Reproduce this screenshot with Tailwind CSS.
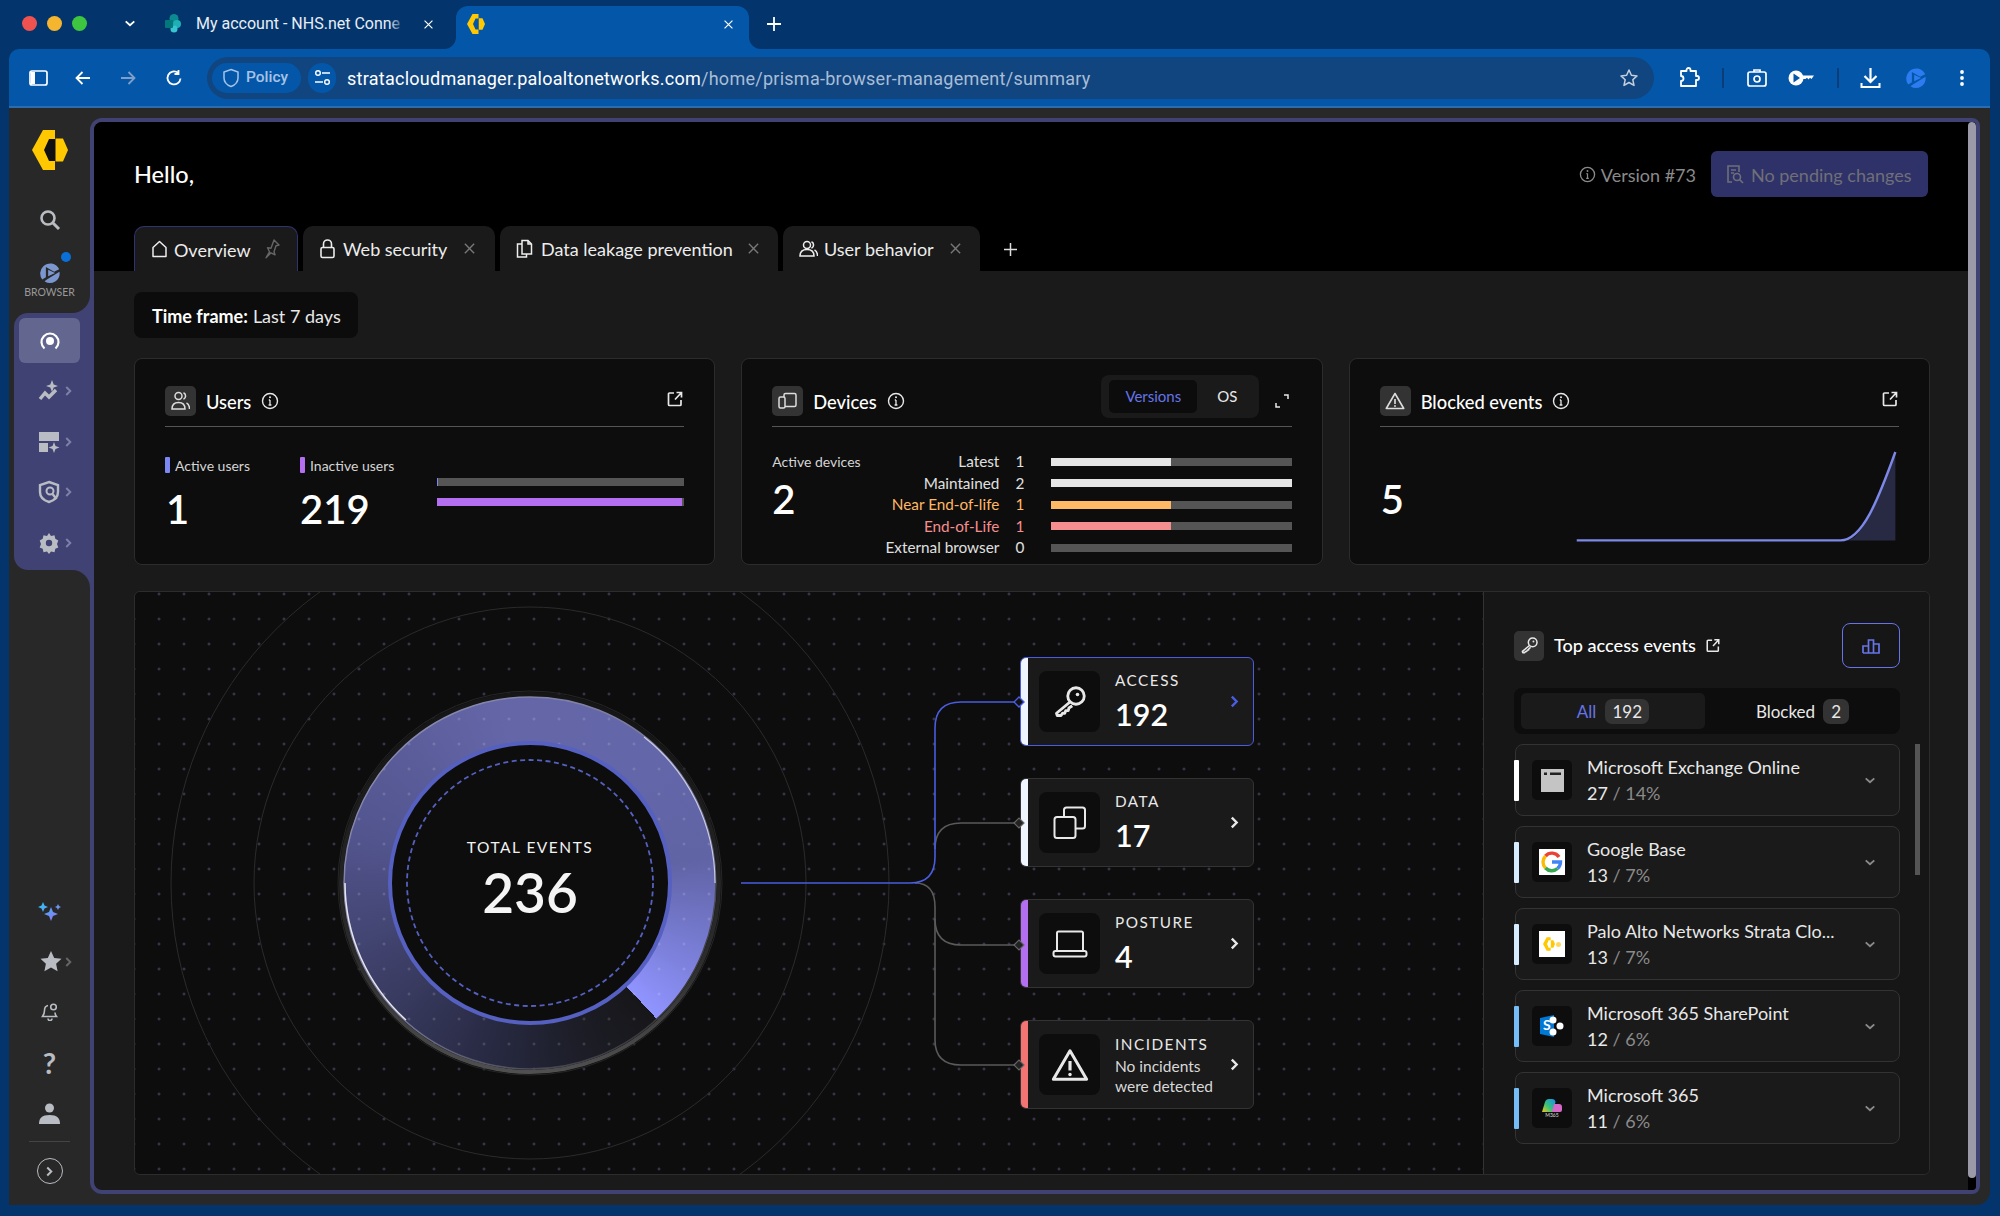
<!DOCTYPE html>
<html lang="en">
<head>
  <meta charset="UTF-8">
  <meta name="viewport" content="width=device-width, initial-scale=1.0">
  <title>Strata Cloud Manager</title>
  <script src="https://cdn.jsdelivr.net/npm/@tailwindcss/browser@4"></script>
</head>
<body class="bg-[#03356c] [font-family:Lato,sans-serif] w-[2000px] h-[1216px] overflow-hidden">
  <!-- shared icons -->
  <svg class="hidden">
    <symbol id="info" viewBox="0 0 18 18"><circle cx="9" cy="9" r="7.5" fill="none" stroke="currentColor" stroke-width="1.4"/><path d="M9 8v5M7.6 13h2.8M7.8 8H9" fill="none" stroke="currentColor" stroke-width="1.3"/><circle cx="9" cy="5.3" r="1" fill="currentColor"/></symbol>
    <symbol id="ext" viewBox="0 0 18 18"><path d="M8 3H3.5A1 1 0 0 0 2.500 4v10.500a1 1 0 0 0 1 1H14a1 1 0 0 0 1-1V10M9 9.500 15.500 2.500M10.500 2.500h5v5" fill="none" stroke="currentColor" stroke-width="1.700"/></symbol>
    <symbol id="close" viewBox="0 0 14 14"><path d="M2 2l10 10M12 2 2 12" fill="none" stroke="currentColor" stroke-width="1.500"/></symbol>
    <symbol id="chev" viewBox="0 0 10 14"><path d="M2.500 2.500 7 7l-4.500 4.500" fill="none" stroke="currentColor" stroke-width="2.200"/></symbol>
    <symbol id="down" viewBox="0 0 14 10"><path d="M2 2.500 7 7l5-4.500" fill="none" stroke="currentColor" stroke-width="2.200"/></symbol>
    <symbol id="key" viewBox="0 0 24 24"><circle cx="16" cy="8" r="5.500" fill="none" stroke="currentColor" stroke-width="1.900"/><circle cx="17" cy="7" r="1.200" fill="currentColor"/><path d="M12 12 3 19.500l.5 1.500h2.500l1-1.500h1.500l.7-1.800h1.600l.5-1.700 2.200-1.500" fill="none" stroke="currentColor" stroke-width="1.900" stroke-linejoin="round"/></symbol>
    <symbol id="warn" viewBox="0 0 24 24"><path d="M12 3 22.500 21h-21z" fill="none" stroke="currentColor" stroke-width="1.900" stroke-linejoin="round"/><path d="M12 9.500v6" stroke="currentColor" stroke-width="2"/><circle cx="12" cy="18" r="1.100" fill="currentColor"/></symbol>
    <symbol id="logo" viewBox="31 130 36 40"><path d="M42 130h12v9h-6l-5 11 5 11h6v9H42l-11-20z" fill="#ffc800"/><path d="M54.500 138.500H62l5 11.500-5 11.500h-7.500z" fill="#ffc800"/></symbol>
    <symbol id="play" viewBox="0 0 24 24"><path d="M4.500 5A10.500 10.500 0 0 1 22 8l-5.500 2.500L7.500 5.500v11L3.500 19A10.500 10.500 0 0 1 4.500 5z" fill="currentColor"/><path d="M10 8.500 17.500 12l-7.500 3.500zM22.300 10.500A10.500 10.500 0 0 1 6 21l3.500-2.500z" fill="currentColor"/></symbol>
  </svg>

  <!-- tab strip -->
  <div class="h-[49px] flex items-end relative text-white">
    <div class="absolute left-[22px] top-[16px] flex gap-[10px]">
      <span class="w-[15px] h-[15px] rounded-full bg-[#f0524f]"></span>
      <span class="w-[15px] h-[15px] rounded-full bg-[#f5b52e]"></span>
      <span class="w-[15px] h-[15px] rounded-full bg-[#3ec640]"></span>
    </div>
    <svg class="absolute left-[124px] top-[19px] w-[12px] h-[9px] text-white"><use href="#down"/></svg>
    <!-- inactive tab -->
    <div class="absolute left-[164px] top-[14px] flex items-center h-[20px]">
      <svg class="w-[18px] h-[20px]" viewBox="0 0 18 20"><circle cx="10" cy="4.500" r="4.500" fill="#0b8a8f"/><circle cx="13" cy="10" r="4" fill="#1fb0b6"/><circle cx="10" cy="15" r="3.500" fill="#37c6d0"/><rect x="1" y="6" width="8" height="8" rx="1" fill="#03787c"/></svg>
      <div class="ml-[14px] w-[209px] whitespace-nowrap text-[16px] text-[#e8eef5] [font-family:Roboto,sans-serif] relative">My account - NHS.net Conne
        <span class="absolute right-0 top-0 bottom-0 w-[16px] bg-gradient-to-r from-transparent to-[#03356c]"></span>
      </div>
    </div>
    <svg class="absolute left-[423px] top-[19px] w-[11px] h-[11px] text-white"><use href="#close"/></svg>
    <!-- active tab -->
    <div class="absolute left-[456px] top-[6px] w-[293px] h-[43px] bg-[#0457a8] rounded-t-[12px]">
      <svg class="absolute -left-[12px] bottom-0 w-[12px] h-[12px]" viewBox="0 0 12 12"><path d="M12 0v12H0A12 12 0 0 0 12 0z" fill="#0457a8"/></svg>
      <svg class="absolute -right-[12px] bottom-0 w-[12px] h-[12px]" viewBox="0 0 12 12"><path d="M0 0v12h12A12 12 0 0 1 0 0z" fill="#0457a8"/></svg>
      <svg class="absolute left-[11px] top-[8px] w-[18px] h-[20px]"><use href="#logo"/></svg>
      <svg class="absolute left-[267px] top-[13px] w-[11px] h-[11px] text-white"><use href="#close"/></svg>
    </div>
    <svg class="absolute left-[767px] top-[17px] w-[14px] h-[14px]" viewBox="0 0 14 14"><path d="M7 0v14M0 7h14" stroke="#fff" stroke-width="1.800"/></svg>
  </div>

  <!-- toolbar -->
  <div class="ml-[9px] mr-[10px] h-[59px] bg-[#0457a8] border-b-2 border-[#2a6cae] rounded-tl-[10px] rounded-tr-[10px] flex items-center text-white">
    <div class="w-[198px] flex items-center">
      <svg class="ml-[20px] w-[19px] h-[18px]" viewBox="0 0 19 18"><rect x="1" y="2" width="17" height="14" rx="2" fill="none" stroke="#fff" stroke-width="1.700"/><rect x="2" y="3" width="4" height="12" fill="#fff"/></svg>
      <svg class="ml-[26px] w-[18px] h-[18px]" viewBox="0 0 18 18"><path d="M16 9H3M8.500 3 2.500 9l6 6" fill="none" stroke="#fff" stroke-width="1.800"/></svg>
      <svg class="ml-[27px] w-[18px] h-[18px]" viewBox="0 0 18 18"><path d="M2 9h13M9.500 3l6 6-6 6" fill="none" stroke="#7f9fcb" stroke-width="1.800"/></svg>
      <svg class="ml-[28px] w-[18px] h-[18px]" viewBox="0 0 18 18"><path d="M15.500 9.500A6.500 6.500 0 1 1 13 3.800M13.500 1v4h-4" fill="none" stroke="#fff" stroke-width="1.800"/></svg>
    </div>
    <div class="w-[1447px] h-[42px] rounded-full bg-[#11457f] flex items-center pl-[5px]">
      <div class="w-[89px] h-[30px] rounded-full bg-[#0457a8] flex items-center pl-[10px]">
        <svg class="w-[18px] h-[20px]" viewBox="0 0 18 20"><path d="M9 1.500 16 4v6c0 4-3 7-7 8.500C5 17 2 14 2 10V4z" fill="none" stroke="#a6c3e6" stroke-width="1.500"/></svg>
        <span class="ml-[6px] text-[15.500px] font-medium text-[#a6c3e6] [font-family:Roboto,sans-serif]">Policy</span>
      </div>
      <div class="ml-[7px] w-[28px] h-[30px] rounded-full bg-[#0457a8] flex items-center justify-center">
        <svg class="w-[17px] h-[17px]" viewBox="0 0 17 17"><circle cx="4" cy="4" r="2.300" fill="none" stroke="#fff" stroke-width="1.400"/><path d="M8 4h8M1 13h8" stroke="#fff" stroke-width="1.400"/><circle cx="13" cy="13" r="2.300" fill="none" stroke="#fff" stroke-width="1.400"/></svg>
      </div>
      <div class="ml-[11px] mt-[1px] flex-1 text-[18px] tracking-[0.26px] whitespace-nowrap text-white [font-family:Roboto,sans-serif]">stratacloudmanager.paloaltonetworks.com<span class="text-[#a9bdd6]">/home/prisma-browser-management/summary</span></div>
      <svg class="mr-[15px] w-[20px] h-[20px]" viewBox="0 0 20 20"><path d="M10 2l2.400 5.300 5.600.6-4.200 3.800 1.200 5.700L10 14.500l-5 2.900 1.200-5.700L2 7.900l5.600-.6z" fill="none" stroke="#c5d0dc" stroke-width="1.500" stroke-linejoin="round"/></svg>
    </div>
    <div class="flex items-center">
      <svg class="ml-[25px] w-[21px] h-[21px]" viewBox="0 0 21 21"><path d="M2 4h5.500V3a2 2 0 0 1 4 0v1H17v5h1a2 2 0 0 1 0 4h-1v6H2v-5a2.500 2.500 0 0 0 0-5z" fill="none" stroke="#fff" stroke-width="1.800" stroke-linejoin="round"/></svg>
      <span class="ml-[22px] w-[2px] h-[20px] bg-[#0b3d79]"></span>
      <svg class="ml-[23px] w-[20px] h-[20px]" viewBox="0 0 20 20"><rect x="1" y="4" width="18" height="14" rx="2" fill="none" stroke="#fff" stroke-width="1.700"/><path d="M7 4V2h6v2" fill="none" stroke="#fff" stroke-width="1.700"/><circle cx="10" cy="11" r="3" fill="none" stroke="#fff" stroke-width="1.700"/></svg>
      <svg class="ml-[21px] w-[26px] h-[18px]" viewBox="0 0 26 18"><circle cx="8" cy="9" r="7.500" fill="#fff"/><path d="M5.500 4.500 12 9l-6.500 4.500z" fill="#0457a8"/><path d="M14 6.500h12l-2.500 3.500-1.500-1.200-1.500 1.700-1.500-1.700-1.500 1.200H14z" fill="#fff"/></svg>
      <span class="ml-[23px] w-[2px] h-[20px] bg-[#0b3d79]"></span>
      <svg class="ml-[21px] w-[21px] h-[22px]" viewBox="0 0 21 22"><path d="M10.500 1v13M4.500 9l6 6 6-6" fill="none" stroke="#fff" stroke-width="2.200"/><path d="M1.500 16v4h18v-4" fill="none" stroke="#fff" stroke-width="2"/></svg>
      <svg class="ml-[24px] w-[22px] h-[22px] text-[#2d7bf0]"><use href="#play"/></svg>
      <svg class="ml-[32px] w-[6px] h-[18px]" viewBox="0 0 6 18"><circle cx="3" cy="3" r="1.900" fill="#fff"/><circle cx="3" cy="9" r="1.900" fill="#fff"/><circle cx="3" cy="15" r="1.900" fill="#fff"/></svg>
    </div>
  </div>

  <!-- browser frame -->
  <div class="ml-[9px] mr-[10px] h-[1097px] bg-[#282828] rounded-b-[14px] flex">
    <!-- product sidebar -->
    <div class="w-[81px] shrink-0 flex flex-col relative text-[#b9bcc2]">
      <div class="absolute right-0 top-[170px] h-[310px] w-[24px] bg-[#3f4272]"></div>
      <div class="h-[205px] bg-[#282828] rounded-br-[18px] relative flex flex-col items-center">
        <svg class="mt-[22px] w-[36px] h-[40px]" viewBox="31 130 36 40"><path d="M48 139h7v22h-7l-5-11z" fill="#111"/><use href="#logo" x="31" y="130" width="36" height="40"/></svg>
        <svg class="mt-[39px] w-[22px] h-[22px]" viewBox="0 0 22 22"><circle cx="9" cy="9" r="6.500" fill="none" stroke="currentColor" stroke-width="2.600"/><path d="M14 14l6 6" stroke="currentColor" stroke-width="3"/></svg>
        <div class="relative mt-[31px] w-[22px] h-[22px] text-[#7c97cf]">
          <svg class="w-[22px] h-[22px]"><use href="#play"/></svg>
          <span class="absolute -right-[10px] -top-[10px] w-[10px] h-[10px] rounded-full bg-[#0a6fd8]"></span>
        </div>
        <div class="text-[10.500px] text-[#999] mt-[1px]">BROWSER</div>
      </div>
      <div class="h-[257px] ml-[5px] bg-[#3f4272] rounded-l-[14px] relative flex flex-col">
        <div class="ml-[5px] mt-[5px] w-[61px] h-[45px] rounded-[6px] bg-[#63668f] flex items-center justify-center">
          <svg class="w-[22px] h-[22px]" viewBox="0 0 22 22"><path d="M5.500 18.500A8.500 8.500 0 1 1 16.500 18.500" fill="none" stroke="#fff" stroke-width="2.200"/><circle cx="11" cy="11" r="4" fill="#fff"/></svg>
        </div>
        <div class="flex-1 flex flex-col justify-around pt-[1px] pb-[2px]">
          <div class="flex items-center pl-[24px]">
            <svg class="w-[22px] h-[26px]" viewBox="0 0 22 24"><path d="M14 1l1.700 4.500 4.300 1.500-4.300 1.500-1.700 4.500-1.700-4.500-4.300-1.500 4.300-1.500z" fill="currentColor"/><path d="M2 20l5-6 4 4 7-7" fill="none" stroke="currentColor" stroke-width="3.400"/></svg>
            <svg class="ml-[4px] w-[9px] h-[14px] text-[#7d81a6]"><use href="#chev"/></svg>
          </div>
          <div class="flex items-center pl-[24px]">
            <svg class="w-[22px] h-[22px]" viewBox="0 0 22 22"><rect x="1" y="1" width="20" height="9" fill="currentColor"/><rect x="1" y="12" width="9" height="9" fill="currentColor"/><path d="M16 11l1.500 4 4 1.500-4 1.500-1.500 4-1.500-4-4-1.500 4-1.500z" fill="currentColor"/></svg>
            <svg class="ml-[4px] w-[9px] h-[14px] text-[#7d81a6]"><use href="#chev"/></svg>
          </div>
          <div class="flex items-center pl-[24px]">
            <svg class="w-[22px] h-[24px]" viewBox="0 0 22 22"><path d="M11 1l9 3v7c0 5-4 8.500-9 10C6 19.500 2 16 2 11V4z" fill="none" stroke="currentColor" stroke-width="2.400"/><circle cx="12" cy="10" r="3.500" fill="#3f4272" stroke="currentColor" stroke-width="2"/><path d="M14.500 13l4 5" stroke="currentColor" stroke-width="2.400"/></svg>
            <svg class="ml-[4px] w-[9px] h-[14px] text-[#7d81a6]"><use href="#chev"/></svg>
          </div>
          <div class="flex items-center pl-[24px]">
            <svg class="w-[22px] h-[24px]" viewBox="0 0 22 22"><path d="M11 1l2 3 3.500-.8.800 3.500 3 1.800-1.300 3.500 1.300 3.500-3 1.300-.8 3.500-3.500-.8-2 2.500-2-2.500-3.500.8-.8-3.500-3-1.300L3 12 1.700 8.500l3-1.800.8-3.500L9 4z" fill="currentColor"/><circle cx="11" cy="11" r="3.200" fill="#3f4272"/></svg>
            <svg class="ml-[4px] w-[9px] h-[14px] text-[#7d81a6]"><use href="#chev"/></svg>
          </div>
        </div>
      </div>
      <div class="flex-1 bg-[#282828] rounded-tr-[18px] relative flex flex-col items-center justify-end pb-[21px]">
        <div class="h-[50px] flex items-center pt-[6px]">
          <svg class="w-[24px] h-[24px]" viewBox="0 0 24 24">
            <defs><linearGradient id="spark" x1="0" y1="0" x2="1" y2="1"><stop offset="0" stop-color="#2bc6f5"/><stop offset="1" stop-color="#9a6df5"/></linearGradient></defs>
            <path d="M5 0l1.500 3.500L10 5 6.500 6.500 5 10 3.500 6.500 0 5l3.500-1.500zM13 5l2 5 5 2-5 2-2 5-2-5-5-2 5-2zM20 2l1 2 2 1-2 1-1 2-1-2-2-1 2-1z" fill="url(#spark)"/>
          </svg>
        </div>
        <div class="h-[51px] flex items-center pl-[13px]">
          <svg class="w-[22px] h-[21px]" viewBox="0 0 22 21"><path d="M11 0l3.200 7 7.300.8-5.400 5 1.500 7.500L11 16.500l-6.600 3.800 1.500-7.500-5.400-5L7.800 7z" fill="currentColor"/></svg>
          <svg class="ml-[2px] w-[9px] h-[14px] text-[#666]"><use href="#chev"/></svg>
        </div>
        <div class="h-[50px] flex items-center">
          <svg class="w-[18px] h-[18px]" viewBox="0 0 18 18" fill="none" stroke="currentColor" stroke-width="1.600"><path d="M7 2.500C4.500 3 3.500 5 3.500 7.500 3.500 10 3 11.500 1.500 13.500h14c-1-1.300-1.500-2.500-1.500-4"/><path d="M7 15.500a2 2 0 0 0 4 0"/><circle cx="12.500" cy="4" r="2.800"/></svg>
        </div>
        <div class="h-[51px] flex items-center text-[29px] font-bold leading-none">?</div>
        <div class="h-[50px] flex items-center">
          <svg class="w-[21px] h-[21px]" viewBox="0 0 21 21"><circle cx="10.500" cy="5" r="4.500" fill="currentColor"/><path d="M0 21c0-6 3-9 10.500-9S21 15 21 21z" fill="currentColor"/></svg>
        </div>
        <div class="mt-[3px] w-[41px] h-px bg-[#444]"></div>
        <div class="mt-[16px] w-[26px] h-[26px] rounded-full border border-[#b9bcc2] flex items-center justify-center">
          <svg class="w-[9px] h-[13px]"><use href="#chev"/></svg>
        </div>
      </div>
    </div>

    <!-- main panel -->
    <div class="mt-[10px] mb-[11px] mr-[10px] flex-1 border-4 border-[#3f4272] rounded-tl-[12px] rounded-bl-[12px] rounded-r-[8px] overflow-hidden flex bg-[#1a1a1a]">
      <div class="flex-1 flex flex-col min-w-0">
        <div class="h-[149px] bg-black flex flex-col px-[40px] pt-[29px] text-white">
          <div class="h-[46px] flex items-center justify-between">
            <div class="text-[23.500px] font-medium pt-[2px]">Hello,</div>
            <div class="flex items-center">
              <svg class="w-[17px] h-[17px] text-[#8a8a8a]"><use href="#info"/></svg>
              <span class="ml-[5px] text-[18px] text-[#8a8a8a] pt-[2px]">Version #73</span>
              <div class="ml-[15px] w-[217px] h-[46px] rounded-[6px] bg-[#2f3268] flex items-center pl-[15px]">
                <svg class="w-[18px] h-[21px]" viewBox="0 0 18 21"><path d="M6 18H2V2h11v6" fill="none" stroke="#6f6f78" stroke-width="1.600"/><path d="M5 6h5M5 9h3" stroke="#6f6f78" stroke-width="1.500"/><circle cx="11" cy="13" r="3.500" fill="none" stroke="#6f6f78" stroke-width="1.600"/><path d="M13.500 15.500 17 19" stroke="#6f6f78" stroke-width="1.600"/></svg>
                <span class="ml-[7px] text-[18px] text-[#6f6f78] whitespace-nowrap pt-[2px]">No pending changes</span>
              </div>
            </div>
          </div>
          <div class="mt-auto flex items-end gap-[5px] text-[18px] text-[#ededed]">
            <div class="w-[164px] h-[45px] rounded-t-[10px] bg-[#1a1a1a] border-t border-l border-r border-[#2e3470] flex items-center pl-[16px]">
              <svg class="w-[17px] h-[18px]" viewBox="0 0 17 18"><path d="M2 7.500 8.500 1.500 15 7.500V16.500H2z" fill="none" stroke="currentColor" stroke-width="1.500" stroke-linejoin="round"/></svg>
              <span class="ml-[6px] pt-[2px]">Overview</span>
              <svg class="ml-[11px] w-[19px] h-[20px] text-[#666]" viewBox="0 0 19 20"><path d="M12 1l5 5-3 .8-2 6 1 3-4-2-5 5 3.500-6-2-4 3.500.500z" fill="none" stroke="currentColor" stroke-width="1.400" stroke-linejoin="round"/></svg>
            </div>
            <div class="w-[192px] h-[45px] rounded-t-[10px] bg-[#1a1a1a] flex items-center pl-[17px]">
              <svg class="w-[15px] h-[20px]" viewBox="0 0 15 20"><rect x="1" y="8.500" width="13" height="10" rx="1.500" fill="none" stroke="currentColor" stroke-width="1.600"/><path d="M3.500 8.500V5a4 4 0 0 1 8 0v3.500" fill="none" stroke="currentColor" stroke-width="1.600"/></svg>
              <span class="ml-[8px] pt-[2px]">Web security</span>
              <svg class="ml-[16px] w-[13px] h-[13px] text-[#777]"><use href="#close"/></svg>
            </div>
            <div class="w-[278px] h-[45px] rounded-t-[10px] bg-[#1a1a1a] flex items-center pl-[16px]">
              <svg class="w-[17px] h-[19px]" viewBox="0 0 17 19"><path d="M6 5H1.500v13h9v-3" fill="none" stroke="currentColor" stroke-width="1.500"/><path d="M6 1.500h6l3.500 3.500v10H6zM12 1.500V5h3.500" fill="none" stroke="currentColor" stroke-width="1.500"/></svg>
              <span class="ml-[8px] whitespace-nowrap pt-[2px]">Data leakage prevention</span>
              <svg class="ml-[14px] w-[13px] h-[13px] text-[#777]"><use href="#close"/></svg>
            </div>
            <div class="w-[197px] h-[45px] rounded-t-[10px] bg-[#1a1a1a] flex items-center pl-[16px]">
              <svg class="w-[19px] h-[18px]" viewBox="0 0 19 18"><circle cx="8" cy="5" r="3.500" fill="none" stroke="currentColor" stroke-width="1.500"/><path d="M1 16c0-5 3-6.500 7-6.500s7 1.500 7 6.500zM12.500 1.800a3.500 3.500 0 0 1 0 6.400M15.500 10c2 1 3 3 3 6" fill="none" stroke="currentColor" stroke-width="1.500"/></svg>
              <span class="ml-[6px] whitespace-nowrap pt-[2px]">User behavior</span>
              <svg class="ml-[15px] w-[13px] h-[13px] text-[#777]"><use href="#close"/></svg>
            </div>
            <svg class="ml-[19px] mb-[15px] w-[13px] h-[13px]" viewBox="0 0 13 13"><path d="M6.500 0v13M0 6.500h13" stroke="#ddd" stroke-width="1.500"/></svg>
          </div>
        </div>

        <div class="flex-1 pl-[40px] pr-[38px] pt-[21px]">
          <div class="w-[224px] h-[46px] rounded-[8px] bg-[#0c0c0c] flex items-center pl-[18px] pt-[2px] text-[18px] text-[#e8e8e8] whitespace-nowrap">
            <span class="font-bold text-white">Time frame:</span><span class="ml-[5px]">Last 7 days</span>
          </div>

          <div class="mt-[20px] grid grid-cols-3 gap-[26px] text-white">
            <!-- Users -->
            <div class="h-[207px] bg-[#0d0d0d] border border-[#2c2c2c] rounded-[8px] px-[30px] pt-[27px]">
              <div class="h-[41px] pb-[10px] border-b border-[#555] flex items-start">
                <div class="w-[31px] h-[30px] rounded-[5px] bg-[#333] flex items-center justify-center">
                  <svg class="w-[19px] h-[20px]" viewBox="0 0 19 20"><circle cx="7.500" cy="5" r="3.500" fill="none" stroke="#ddd" stroke-width="1.500"/><path d="M1 18c0-5 3-6.500 6.500-6.500S14 13 14 18zM12.500 1.800a3.500 3.500 0 0 1 0 6.400M15.500 12c2 1 3 3 3 6" fill="none" stroke="#ddd" stroke-width="1.500"/></svg>
                </div>
                <span class="ml-[10px] text-[18.300px] font-medium leading-[32px]">Users</span>
                <svg class="ml-[10px] mt-[6px] w-[18px] h-[18px] text-[#e8e8e8]"><use href="#info"/></svg>
                <svg class="ml-auto mt-[4px] w-[18px] h-[18px] text-[#e8e8e8]"><use href="#ext"/></svg>
              </div>
              <div class="flex mt-[30px]">
                <div class="w-[135px]">
                  <div class="flex items-center text-[14px] text-[#d5d5d5] h-[16px]"><span class="w-[5px] h-[16px] bg-[#7d86f5] rounded-[1px] mr-[5px]"></span>Active users</div>
                  <div class="text-[40px] font-semibold leading-[48px] mt-[12px] pl-[1px]">1</div>
                </div>
                <div class="w-[137px]">
                  <div class="flex items-center text-[14px] text-[#d5d5d5] h-[16px]"><span class="w-[5px] h-[16px] bg-[#b46ef0] rounded-[1px] mr-[5px]"></span>Inactive users</div>
                  <div class="text-[40px] font-semibold leading-[48px] mt-[12px]">219</div>
                </div>
                <div class="flex-1 mt-[21px] flex flex-col gap-[12px]">
                  <div class="h-[8px] bg-[#555]"><div class="w-[1px] h-full bg-[#7d86f5]"></div></div>
                  <div class="h-[8px] bg-[#555]"><div class="w-[99%] h-full bg-[#b46ef0]"></div></div>
                </div>
              </div>
            </div>

            <!-- Devices -->
            <div class="h-[207px] bg-[#0d0d0d] border border-[#2c2c2c] rounded-[8px] px-[30px] pt-[27px] relative">
              <div class="h-[41px] pb-[10px] border-b border-[#555] flex items-start">
                <div class="w-[31px] h-[30px] rounded-[5px] bg-[#333] flex items-center justify-center">
                  <svg class="w-[19px] h-[18px]" viewBox="0 0 19 18"><rect x="6" y="1.500" width="12" height="13" rx="1.500" fill="none" stroke="#ddd" stroke-width="1.500"/><rect x="1" y="5" width="6" height="11" rx="1.500" fill="#333" stroke="#ddd" stroke-width="1.500"/></svg>
                </div>
                <span class="ml-[10px] text-[18.300px] font-medium leading-[32px]">Devices</span>
                <svg class="ml-[10px] mt-[6px] w-[18px] h-[18px] text-[#e8e8e8]"><use href="#info"/></svg>
              </div>
              <div class="absolute left-[359px] top-[16px] w-[158px] h-[43px] rounded-[8px] bg-[#1a1a1a] flex items-center pl-[8px] text-[15px]">
                <div class="w-[88px] h-[33px] rounded-[5px] bg-[#0c0c0c] text-[#6674e8] flex items-center justify-center">Versions</div>
                <div class="w-[60px] text-center text-[#e8e8e8]">OS</div>
              </div>
              <svg class="absolute left-[533px] top-[35px] w-[14px] h-[14px]" viewBox="0 0 14 14"><path d="M9 1h4v4M1 9v4h4" fill="none" stroke="#e8e8e8" stroke-width="1.500"/></svg>
              <div class="flex mt-[24px]">
                <div class="w-[100px]">
                  <div class="text-[14px] text-[#d5d5d5] h-[21px] leading-[21px] whitespace-nowrap">Active devices</div>
                  <div class="text-[40px] font-semibold leading-[48px] mt-[3px]">2</div>
                </div>
                <div class="flex-1 flex flex-col text-[15.300px] leading-[21.500px] text-[#e0e0e0]">
                  <div class="flex items-center"><span class="w-[127px] text-right whitespace-nowrap">Latest</span><span class="w-[41px] text-center">1</span><span class="w-[11px]"></span><div class="flex-1 h-[8px] bg-[#555]"><div class="w-1/2 h-full bg-[#e5e5e5]"></div></div></div>
                  <div class="flex items-center"><span class="w-[127px] text-right whitespace-nowrap">Maintained</span><span class="w-[41px] text-center">2</span><span class="w-[11px]"></span><div class="flex-1 h-[8px] bg-[#555]"><div class="w-full h-full bg-[#e5e5e5]"></div></div></div>
                  <div class="flex items-center text-[#ffb866]"><span class="w-[127px] text-right whitespace-nowrap">Near End-of-life</span><span class="w-[41px] text-center">1</span><span class="w-[11px]"></span><div class="flex-1 h-[8px] bg-[#555]"><div class="w-1/2 h-full bg-[#ffb866]"></div></div></div>
                  <div class="flex items-center text-[#f58f8f]"><span class="w-[127px] text-right whitespace-nowrap">End-of-Life</span><span class="w-[41px] text-center">1</span><span class="w-[11px]"></span><div class="flex-1 h-[8px] bg-[#555]"><div class="w-1/2 h-full bg-[#f58f8f]"></div></div></div>
                  <div class="flex items-center"><span class="w-[127px] text-right whitespace-nowrap">External browser</span><span class="w-[41px] text-center">0</span><span class="w-[11px]"></span><div class="flex-1 h-[8px] bg-[#555]"></div></div>
                </div>
              </div>
            </div>

            <!-- Blocked events -->
            <div class="h-[207px] bg-[#0d0d0d] border border-[#2c2c2c] rounded-[8px] px-[30px] pt-[27px] relative">
              <div class="h-[41px] pb-[10px] border-b border-[#555] flex items-start">
                <div class="w-[31px] h-[30px] rounded-[5px] bg-[#333] flex items-center justify-center">
                  <svg class="w-[20px] h-[20px] text-[#ddd]"><use href="#warn"/></svg>
                </div>
                <span class="ml-[10px] text-[18.300px] font-medium leading-[32px]">Blocked events</span>
                <svg class="ml-[10px] mt-[6px] w-[18px] h-[18px] text-[#e8e8e8]"><use href="#info"/></svg>
                <svg class="ml-auto mt-[4px] w-[18px] h-[18px] text-[#e8e8e8]"><use href="#ext"/></svg>
              </div>
              <div class="text-[40px] font-semibold leading-[48px] mt-[48px] pl-[1px]">5</div>
              <svg class="absolute left-0 top-0 w-full h-full pointer-events-none" viewBox="0 0 580 205">
                <g transform="translate(-1349 -360)">
                  <path d="M1846 541.500C1862 541 1878 500 1895 453V541.500z" fill="#282a44"/>
                  <path d="M1576 541.500H1840C1862 541.500 1878 500 1895 453" fill="none" stroke="#7d88e8" stroke-width="2.400"/>
                </g>
              </svg>
            </div>
          </div>

          <!-- big panel -->
          <div class="mt-[26px] h-[584px] rounded-[6px] border border-[#2c2c2c] overflow-hidden flex text-white">
            <div class="w-[1348px] shrink-0 relative bg-[#0d0d0d] bg-[radial-gradient(circle,#42425a_1px,transparent_1.300px)] bg-[size:25px_25px] bg-[position:11.500px_-10.500px]">
              <svg class="absolute inset-0 w-full h-full" viewBox="0 0 1348 582">
                <g transform="translate(-135 -593)" fill="none">
                  <circle cx="530" cy="884" r="276" stroke="#2b2b2b"/>
                  <circle cx="530" cy="884" r="359" stroke="#2b2b2b"/>
                  <path d="M935 850Q935 824 961 824H1019" stroke="#5a5a5a" stroke-width="1.600"/>
                  <path d="M915 884Q935 884 935 908V1041Q935 1066 961 1066H1019" stroke="#5a5a5a" stroke-width="1.600"/>
                  <path d="M935 920Q935 946 961 946H1019" stroke="#5a5a5a" stroke-width="1.600"/>
                  <path d="M741 884H910Q935 884 935 858V729Q935 703 961 703H1019" stroke="#4a5ce0" stroke-width="1.600"/>
                </g>
              </svg>

              <!-- donut -->
              <div class="absolute left-[209px] top-[105px] w-[372px] h-[372px] rounded-full bg-[conic-gradient(from_137deg,#17171a_0deg,#1c1d26_25deg,#272941_55deg,#3c3e66_100deg,#53558f_150deg,#6466a8_215deg,#6366a8_270deg,#6063a4_305deg,#7d81dc_340deg,#9094ff_360deg)]">
                <div class="absolute inset-0 rounded-full bg-[radial-gradient(circle,#ffffff30_1px,transparent_1.300px)] bg-[size:25px_25px] bg-[position:2.500px_9.500px]"></div>
                <svg class="absolute inset-0 w-full h-full overflow-visible" viewBox="0 0 372 372" fill="none">
                  <defs>
                    <linearGradient id="rimOut" x1="0" y1="0" x2="0" y2="1"><stop offset="0.100" stop-color="#161616"/><stop offset="0.700" stop-color="#2c2c2c"/><stop offset="1" stop-color="#505050"/></linearGradient>
                    <linearGradient id="rimIn" x1="0" y1="0" x2="1" y2="1"><stop offset="0" stop-color="#8d8fb5"/><stop offset="0.500" stop-color="#77789a"/><stop offset="0.900" stop-color="#333"/></linearGradient>
                  </defs>
                  <circle cx="186" cy="186" r="189" stroke="url(#rimOut)" stroke-width="4"/>
                  <circle cx="186" cy="186" r="192" stroke="#262626" stroke-width="1"/>
                  <circle cx="186" cy="186" r="186" stroke="url(#rimIn)" stroke-width="1.500"/>
                  <path d="M1 186A185 185 0 0 0 62 323" stroke="#e6e6ee" stroke-width="1.500"/>
                  <path d="M300 40A185 185 0 0 1 371 186" stroke="#c9cbe6" stroke-width="1.200"/>
                </svg>
                <div class="absolute inset-[44px] rounded-full bg-[#0d0d0d] border-4 border-[#5560c0] flex flex-col items-center justify-center">
                  <svg class="absolute inset-[14px] w-[248px] h-[248px]" viewBox="0 0 248 248" fill="none"><circle cx="124" cy="124" r="123" stroke="#5560c0" stroke-width="1.800" stroke-dasharray="5 3.500"/></svg>
                  <div class="text-[15.500px] tracking-[1.500px] text-[#f2f2f2] leading-[18px] -mt-[5px]">TOTAL EVENTS</div>
                  <div class="text-[55px] font-semibold leading-[62px] mt-[5px] text-[#f5f5f5]">236</div>
                </div>
              </div>

              <!-- nodes -->
              <div class="absolute left-[885px] top-[65px] w-[234px] flex flex-col gap-[32px]">
                <div class="h-[89px] bg-[#1a1a1a] border border-[#4a5ce0] rounded-[6px] overflow-hidden flex items-center relative">
                  <span class="w-[7px] h-full bg-[#f0f6ff] shrink-0"></span>
                  <div class="ml-[11px] w-[61px] h-[61px] rounded-[8px] bg-[#0d0d0d] flex items-center justify-center"><svg class="w-[36px] h-[36px] text-[#e8e8e8]"><use href="#key"/></svg></div>
                  <div class="ml-[15px]">
                    <div class="text-[15.300px] tracking-[1.500px] text-[#e8e8e8] leading-[18px]">ACCESS</div>
                    <div class="text-[30.500px] font-semibold leading-[38px] mt-[6px]">192</div>
                  </div>
                  <svg class="absolute right-[13px] w-[11px] h-[15px] text-[#4a5ce0]"><use href="#chev"/></svg>
                </div>
                <div class="h-[89px] bg-[#1a1a1a] border border-[#333] rounded-[6px] overflow-hidden flex items-center relative">
                  <span class="w-[7px] h-full bg-[#f0f6ff] shrink-0"></span>
                  <div class="ml-[11px] w-[61px] h-[61px] rounded-[8px] bg-[#0d0d0d] flex items-center justify-center">
                    <svg class="w-[34px] h-[34px]" viewBox="0 0 34 34" fill="none" stroke="#e8e8e8" stroke-width="2"><rect x="11" y="1.500" width="21" height="21" rx="2.500"/><rect x="1.500" y="11" width="21" height="21" rx="2.500" fill="#0d0d0d"/></svg>
                  </div>
                  <div class="ml-[15px]">
                    <div class="text-[15.300px] tracking-[1.500px] text-[#e8e8e8] leading-[18px]">DATA</div>
                    <div class="text-[30.500px] font-semibold leading-[38px] mt-[6px]">17</div>
                  </div>
                  <svg class="absolute right-[13px] w-[11px] h-[15px] text-[#e8e8e8]"><use href="#chev"/></svg>
                </div>
                <div class="h-[89px] bg-[#1a1a1a] border border-[#333] rounded-[6px] overflow-hidden flex items-center relative">
                  <span class="w-[7px] h-full bg-[#b46ef0] shrink-0"></span>
                  <div class="ml-[11px] w-[61px] h-[61px] rounded-[8px] bg-[#0d0d0d] flex items-center justify-center">
                    <svg class="w-[36px] h-[28px]" viewBox="0 0 36 28" fill="none" stroke="#e8e8e8" stroke-width="2"><path d="M5 20V3a1.500 1.500 0 0 1 1.500-1.500h23A1.500 1.500 0 0 1 31 3v17"/><rect x="1.500" y="21" width="33" height="5.500" rx="2"/></svg>
                  </div>
                  <div class="ml-[15px]">
                    <div class="text-[15.300px] tracking-[1.500px] text-[#e8e8e8] leading-[18px]">POSTURE</div>
                    <div class="text-[30.500px] font-semibold leading-[38px] mt-[6px]">4</div>
                  </div>
                  <svg class="absolute right-[13px] w-[11px] h-[15px] text-[#e8e8e8]"><use href="#chev"/></svg>
                </div>
                <div class="h-[89px] bg-[#1a1a1a] border border-[#333] rounded-[6px] overflow-hidden flex items-center relative">
                  <span class="w-[7px] h-full bg-[#f47373] shrink-0"></span>
                  <div class="ml-[11px] w-[61px] h-[61px] rounded-[8px] bg-[#0d0d0d] flex items-center justify-center"><svg class="w-[38px] h-[38px] text-[#e8e8e8]"><use href="#warn"/></svg></div>
                  <div class="ml-[15px] pt-[2px]">
                    <div class="text-[15.300px] tracking-[1.500px] text-[#e8e8e8] leading-[18px]">INCIDENTS</div>
                    <div class="text-[15.500px] leading-[20.500px] text-[#d8d8d8] mt-[3px] whitespace-nowrap">No incidents<br>were detected</div>
                  </div>
                  <svg class="absolute right-[13px] w-[11px] h-[15px] text-[#e8e8e8]"><use href="#chev"/></svg>
                </div>
              </div>

              <!-- connector diamonds sit over the node edge -->
              <svg class="absolute inset-0 w-full h-full pointer-events-none" viewBox="0 0 1348 582">
                <g transform="translate(-135 -593)">
                  <path d="M1014 703l5-5 5 5-5 5z" fill="#111" stroke="#4a5ce0" stroke-width="1.400"/>
                  <path d="M1014 824l5-5 5 5-5 5z" fill="#222" stroke="#666" stroke-width="1.200"/>
                  <path d="M1014 946l5-5 5 5-5 5z" fill="#222" stroke="#666" stroke-width="1.200"/>
                  <path d="M1014 1066l5-5 5 5-5 5z" fill="#222" stroke="#666" stroke-width="1.200"/>
                </g>
              </svg>
            </div>

            <!-- top access events -->
            <div class="flex-1 bg-[#161616] border-l border-[#333] pl-[30px] pr-[29px] pt-[31px] relative">
              <div class="flex items-center h-[45px]">
                <div class="w-[30px] h-[30px] rounded-[5px] bg-[#333] flex items-center justify-center"><svg class="w-[19px] h-[19px] text-[#e8e8e8]"><use href="#key"/></svg></div>
                <span class="ml-[10px] text-[18.100px] font-medium">Top access events</span>
                <svg class="ml-[9px] w-[16px] h-[17px] text-[#e8e8e8]"><use href="#ext"/></svg>
                <div class="ml-auto w-[58px] h-[45px] rounded-[8px] border border-[#6674e8] flex items-center justify-center">
                  <svg class="w-[18px] h-[16px]" viewBox="0 0 18 16" fill="none" stroke="#6674e8" stroke-width="1.700"><path d="M1 15V8h5.500v7M6.500 15V2h5v13M11.500 15V6H17v9zM1 15h16"/></svg>
                </div>
              </div>
              <div class="mt-[20px] h-[46px] rounded-[8px] bg-[#0d0d0d] flex items-center pl-[7px] text-[17px]">
                <div class="w-[184px] h-[36px] rounded-[5px] bg-[#1a1a1a] flex items-center justify-center">
                  <span class="text-[#6674e8] pt-[1px]">All</span><span class="ml-[9px] w-[44px] h-[25px] rounded-[7px] bg-[#333] flex items-center justify-center text-[#e8e8e8] pt-[1px]">192</span>
                </div>
                <div class="flex-1 flex items-center justify-center text-[#e8e8e8]">
                  <span class="pt-[1px]">Blocked</span><span class="ml-[8px] w-[26px] h-[25px] rounded-[7px] bg-[#333] flex items-center justify-center pt-[1px]">2</span>
                </div>
              </div>
              <div class="mt-[10px] flex flex-col gap-[10px]">
                <div class="ml-[1px] h-[72px] bg-[#1a1a1a] border border-[#333] rounded-[8px] flex items-center relative">
                  <span class="absolute -left-[2px] top-[15px] w-[5px] h-[41px] rounded-[1px] bg-white"></span>
                  <div class="ml-[16px] w-[40px] h-[40px] rounded-[5px] bg-[#0d0d0d] flex items-center justify-center">
                    <svg class="w-[23px] h-[23px]" viewBox="0 0 23 23"><rect width="23" height="23" fill="#c4c4c4"/><rect x="3" y="3.500" width="3" height="2.500" fill="#222"/><rect x="9" y="3.500" width="11" height="2.500" fill="#222"/></svg>
                  </div>
                  <div class="ml-[15px] flex-1">
                    <div class="text-[18px] leading-[26px] text-[#e8e8e8]">Microsoft Exchange Online</div>
                    <div class="text-[18px] leading-[26px] text-[#e8e8e8]">27 <span class="text-[#8a8a8a]">/ 14%</span></div>
                  </div>
                  <svg class="mr-[23px] w-[12px] h-[9px] text-[#8a8a8a]"><use href="#down"/></svg>
                </div>
                <div class="ml-[1px] h-[72px] bg-[#1a1a1a] border border-[#333] rounded-[8px] flex items-center relative">
                  <span class="absolute -left-[2px] top-[15px] w-[5px] h-[41px] rounded-[1px] bg-[#d8ecff]"></span>
                  <div class="ml-[16px] w-[40px] h-[40px] rounded-[5px] bg-[#0d0d0d] flex items-center justify-center">
                    <svg class="w-[26px] h-[26px]" viewBox="0 0 26 26"><rect width="26" height="26" fill="#fff"/><path d="M20 8A8.500 8.500 0 0 0 6.500 7" fill="none" stroke="#ea4335" stroke-width="3.400"/><path d="M6.500 7a8.500 8.500 0 0 0 0 12" fill="none" stroke="#fbbc05" stroke-width="3.400"/><path d="M6.500 19a8.500 8.500 0 0 0 12 .5" fill="none" stroke="#34a853" stroke-width="3.400"/><path d="M18.500 19.500a8.500 8.500 0 0 0 3-6.500H13" fill="none" stroke="#4285f4" stroke-width="3.400"/></svg>
                  </div>
                  <div class="ml-[15px] flex-1">
                    <div class="text-[18px] leading-[26px] text-[#e8e8e8]">Google Base</div>
                    <div class="text-[18px] leading-[26px] text-[#e8e8e8]">13 <span class="text-[#8a8a8a]">/ 7%</span></div>
                  </div>
                  <svg class="mr-[23px] w-[12px] h-[9px] text-[#8a8a8a]"><use href="#down"/></svg>
                </div>
                <div class="ml-[1px] h-[72px] bg-[#1a1a1a] border border-[#333] rounded-[8px] flex items-center relative">
                  <span class="absolute -left-[2px] top-[15px] w-[5px] h-[41px] rounded-[1px] bg-[#d8ecff]"></span>
                  <div class="ml-[16px] w-[40px] h-[40px] rounded-[5px] bg-[#0d0d0d] flex items-center justify-center">
                    <div class="w-[26px] h-[26px] bg-white flex items-center pl-[4px]"><svg class="w-[12px] h-[14px]"><use href="#logo"/></svg><span class="ml-[1px] w-[5px] h-[5px] rounded-full bg-[#ffd75e]"></span></div>
                  </div>
                  <div class="ml-[15px] flex-1">
                    <div class="text-[18px] leading-[26px] text-[#e8e8e8] whitespace-nowrap">Palo Alto Networks Strata Clo...</div>
                    <div class="text-[18px] leading-[26px] text-[#e8e8e8]">13 <span class="text-[#8a8a8a]">/ 7%</span></div>
                  </div>
                  <svg class="mr-[23px] w-[12px] h-[9px] text-[#8a8a8a]"><use href="#down"/></svg>
                </div>
                <div class="ml-[1px] h-[72px] bg-[#1a1a1a] border border-[#333] rounded-[8px] flex items-center relative">
                  <span class="absolute -left-[2px] top-[15px] w-[5px] h-[41px] rounded-[1px] bg-[#74bdf7]"></span>
                  <div class="ml-[16px] w-[40px] h-[40px] rounded-[5px] bg-[#0d0d0d] flex items-center justify-center relative">
                    <svg class="w-[24px] h-[22px]" viewBox="0 0 24 22"><path d="M0 3 14 0v22L0 19z" fill="#0078d4"/><circle cx="13" cy="5" r="3.500" fill="#fff"/><circle cx="20" cy="11" r="3.500" fill="#fff"/><circle cx="13" cy="17" r="3.500" fill="#fff"/></svg>
                    <span class="absolute left-[11px] top-[8px] text-[14px] font-bold leading-[22px] text-white">S</span>
                  </div>
                  <div class="ml-[15px] flex-1">
                    <div class="text-[18px] leading-[26px] text-[#e8e8e8]">Microsoft 365 SharePoint</div>
                    <div class="text-[18px] leading-[26px] text-[#e8e8e8]">12 <span class="text-[#8a8a8a]">/ 6%</span></div>
                  </div>
                  <svg class="mr-[23px] w-[12px] h-[9px] text-[#8a8a8a]"><use href="#down"/></svg>
                </div>
                <div class="ml-[1px] h-[72px] bg-[#1a1a1a] border border-[#333] rounded-[8px] flex items-center relative">
                  <span class="absolute -left-[2px] top-[15px] w-[5px] h-[41px] rounded-[1px] bg-[#74bdf7]"></span>
                  <div class="ml-[16px] w-[40px] h-[40px] rounded-[5px] bg-[#0d0d0d] flex flex-col items-center justify-center">
                    <svg class="w-[20px] h-[13px] mt-[1px]" viewBox="0 0 20 13">
                      <defs><linearGradient id="m365" x1="0" y1="1" x2="1" y2="0"><stop offset="0" stop-color="#f5c518"/><stop offset=".45" stop-color="#36c37a"/><stop offset="1" stop-color="#1a8ff0"/></linearGradient></defs>
                      <path d="M0 13 3 3Q4 0 7 0h3q3 0 3.500 3L11 13z" fill="url(#m365)"/><path d="M12 5h5q3 0 3 3v3q0 2-2 2H10z" fill="#d668c8"/>
                    </svg>
                    <span class="text-[5px] leading-[6px] text-[#ddd]">M365</span>
                  </div>
                  <div class="ml-[15px] flex-1">
                    <div class="text-[18px] leading-[26px] text-[#e8e8e8]">Microsoft 365</div>
                    <div class="text-[18px] leading-[26px] text-[#e8e8e8]">11 <span class="text-[#8a8a8a]">/ 6%</span></div>
                  </div>
                  <svg class="mr-[23px] w-[12px] h-[9px] text-[#8a8a8a]"><use href="#down"/></svg>
                </div>
              </div>
              <span class="absolute right-[9px] top-[152px] w-[5px] h-[131px] bg-[#555]"></span>
            </div>
          </div>
        </div>
      </div>
      <!-- page scrollbar -->
      <div class="w-[8px] shrink-0 bg-black"><div class="h-[1056px] bg-[#9a9aa8] rounded-[4px]"></div></div>
    </div>
  </div>
</body>
</html>
